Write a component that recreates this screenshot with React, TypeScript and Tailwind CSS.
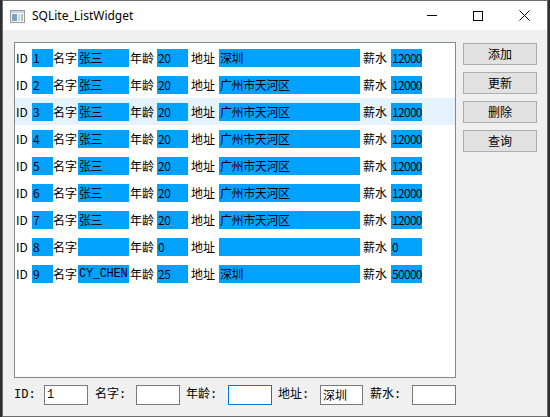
import React from 'react';

type Row = { id: string; name: string; age: string; addr: string; pay: string; mono?: boolean };

const rows: Row[] = [
  { id: '1', name: '张三', age: '20', addr: '深圳', pay: '12000' },
  { id: '2', name: '张三', age: '20', addr: '广州市天河区', pay: '12000' },
  { id: '3', name: '张三', age: '20', addr: '广州市天河区', pay: '12000' },
  { id: '4', name: '张三', age: '20', addr: '广州市天河区', pay: '12000' },
  { id: '5', name: '张三', age: '20', addr: '广州市天河区', pay: '12000' },
  { id: '6', name: '张三', age: '20', addr: '广州市天河区', pay: '12000' },
  { id: '7', name: '张三', age: '20', addr: '广州市天河区', pay: '12000' },
  { id: '8', name: '', age: '0', addr: '', pay: '0' },
  { id: '9', name: 'CY_CHEN', age: '25', addr: '深圳', pay: '50000', mono: true },
];

const uiFont = "font-['Microsoft_YaHei','Noto_Sans_CJK_SC',sans-serif]";
const simFont = "font-['Liberation_Mono','Noto_Sans_CJK_SC',monospace]";

// blue value box inside a list row
const Field = ({ w, children, mono, tight }: { w: string; children?: React.ReactNode; mono?: boolean; tight?: boolean }) => (
  <div
    className={`${w} h-[18px] bg-[#00a2ff] pl-[1px] flex items-center whitespace-nowrap overflow-hidden leading-none ${
      mono ? `${simFont} text-[12px] tracking-[-0.3px]` : tight ? 'tracking-[-0.7px]' : 'tracking-[-0.4px]'
    }`}
  >
    {children}
  </div>
);

const ListRow = ({ row, active }: { row: Row; active?: boolean }) => (
  <div className={`h-[27px] flex items-center pl-[1px] ${active ? 'bg-[#e5f3ff]' : ''}`}>
    <span className="w-[16px]">ID</span>
    <Field w="w-[21px]">{row.id}</Field>
    <span className="w-[25px]">名字</span>
    <Field w="w-[51px]" mono={row.mono}>{row.name}</Field>
    <span className="w-[28px] pl-[1px]">年龄</span>
    <Field w="w-[31px]">{row.age}</Field>
    <span className="w-[31px] pl-[3px]">地址</span>
    <Field w="w-[141px]">{row.addr}</Field>
    <span className="w-[31px] pl-[3px]">薪水</span>
    <Field w="w-[31px]" tight>{row.pay}</Field>
  </div>
);

const Btn = ({ label }: { label: string }) => (
  <button className="w-[74px] h-[22px] bg-[#e1e1e1] border border-[#adadad] text-[12px] leading-none text-black">
    {label}
  </button>
);

const BottomLabel = ({ text, className }: { text: string; className: string }) => (
  <span className={`${className} ${simFont} text-[12px] text-black whitespace-nowrap`}>{text}</span>
);

const Input = ({ w, value, focused, cjk }: { w: string; value?: string; focused?: boolean; cjk?: boolean }) => (
  <div
    className={`${w} h-[20px] bg-white border ${
      focused ? 'border-[#0078d7]' : 'border-[#7a7a7a]'
    } flex items-center pl-[2px] text-[12px] leading-none ${cjk ? uiFont : simFont}`}
  >
    {value}
  </div>
);

const WinIcon = () => (
  <svg width="15" height="13" viewBox="0 0 15 13">
    <rect x="0.5" y="0.5" width="14" height="12" fill="#f4f4f4" stroke="#9a9a9a" />
    <rect x="1" y="1" width="13" height="2" fill="#c8d4e0" />
    <rect x="2" y="4" width="5" height="7" fill="#7fa3bd" />
    <rect x="8" y="4" width="2" height="7" fill="#cfd8dc" />
    <rect x="11" y="4" width="2" height="7" fill="#a9c4b0" />
  </svg>
);

export default function App() {
  return (
    <div className="w-[550px] h-[417px] bg-[#2f2f2f] overflow-hidden">
      <div className={`ml-[2px] w-[546px] h-[417px] border border-[#6d6d6d] bg-[#f0f0f0] flex flex-col ${uiFont} text-[12px] text-black`}>
        {/* title bar */}
        <div className="h-[29px] bg-white flex items-center">
          <div className="ml-[7px] mt-[1px]">
            <WinIcon />
          </div>
          <span className="ml-[7px] font-['Segoe_UI','Noto_Sans',sans-serif] text-[12px] text-black">SQLite_ListWidget</span>
          <div className="ml-auto flex h-full">
            <div className="w-[46px] h-full flex items-center justify-center">
              <div className="w-[10px] h-[1px] bg-black" />
            </div>
            <div className="w-[46px] h-full flex items-center justify-center">
              <div className="w-[10px] h-[10px] border border-black" />
            </div>
            <div className="w-[46px] h-full flex items-center justify-center">
              <svg width="11" height="11" viewBox="0 0 11 11">
                <path d="M0.5 0.5 L10.5 10.5 M10.5 0.5 L0.5 10.5" stroke="#000" strokeWidth="1" />
              </svg>
            </div>
          </div>
        </div>

        {/* client */}
        <div className="flex-1 flex pl-[11px] pt-[12px]">
          <div className="flex flex-col">
            <div className="w-[442px] h-[336px] bg-white border border-[#828790] pt-[1px]">
              {rows.map((r, i) => (
                <ListRow key={r.id} row={r} active={i === 2} />
              ))}
            </div>
            <div className="flex items-center mt-[7px]">
              <BottomLabel text="ID:" className="w-[30px]" />
              <Input w="w-[44px]" value="1" />
              <BottomLabel text="名字:" className="ml-[7px] w-[41px]" />
              <Input w="w-[44px]" />
              <BottomLabel text="年龄:" className="ml-[6px] w-[42px]" />
              <Input w="w-[44px]" focused />
              <BottomLabel text="地址:" className="ml-[6px] w-[42px]" />
              <Input w="w-[43px]" value="深圳" cjk />
              <BottomLabel text="薪水:" className="ml-[7px] w-[42px]" />
              <Input w="w-[44px]" />
            </div>
          </div>
          <div className="ml-[7px] pt-[1px] flex flex-col gap-[7px]">
            <Btn label="添加" />
            <Btn label="更新" />
            <Btn label="删除" />
            <Btn label="查询" />
          </div>
        </div>
      </div>
    </div>
  );
}
